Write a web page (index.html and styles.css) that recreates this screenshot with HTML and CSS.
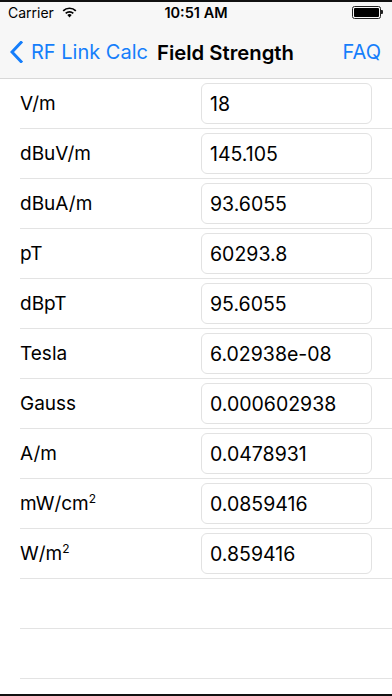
FILE: index.html
```html
<!DOCTYPE html>
<html>
<head>
<meta charset="utf-8">
<link rel="stylesheet" href="styles.css">
</head>
<body>
<div class="screen">
  <div class="status">
    <div class="status-left">
      <span class="carrier">Carrier</span>
      <svg class="wifi" width="15" height="11" viewBox="0 0 15 11">
        <path d="M7.5 10.5 L5.3 8.1 A3.2 3.2 0 0 1 9.7 8.1 Z" fill="#000"/>
        <path d="M3.7 6.4 A5.4 5.4 0 0 1 11.3 6.4" stroke="#000" stroke-width="1.7" fill="none"/>
        <path d="M1.2 3.9 A8.8 8.8 0 0 1 13.8 3.9" stroke="#000" stroke-width="1.7" fill="none"/>
      </svg>
    </div>
    <div class="time">10:51 AM</div>
    <div class="status-right">
      <div class="battery"><div class="battery-fill"></div></div>
      <div class="battery-nub"></div>
    </div>
  </div>
  <div class="nav">
    <div class="back">
      <svg class="chevron" width="13" height="22" viewBox="0 0 13 22">
        <path d="M11 1.5 L2 11 L11 20.5" stroke="#157efb" stroke-width="3" fill="none" stroke-linecap="square"/>
      </svg>
      <span>RF Link Calc</span>
    </div>
    <div class="title">Field Strength</div>
    <div class="faq">FAQ</div>
  </div>
  <div class="list">
    <div class="row"><div class="label">V/m</div><div class="field">18</div></div>
    <div class="row"><div class="label">dBuV/m</div><div class="field">145.105</div></div>
    <div class="row"><div class="label">dBuA/m</div><div class="field">93.6055</div></div>
    <div class="row"><div class="label">pT</div><div class="field">60293.8</div></div>
    <div class="row"><div class="label">dBpT</div><div class="field">95.6055</div></div>
    <div class="row"><div class="label">Tesla</div><div class="field">6.02938e-08</div></div>
    <div class="row"><div class="label">Gauss</div><div class="field">0.000602938</div></div>
    <div class="row"><div class="label">A/m</div><div class="field">0.0478931</div></div>
    <div class="row"><div class="label">mW/cm<sup>2</sup></div><div class="field">0.0859416</div></div>
    <div class="row"><div class="label">W/m<sup>2</sup></div><div class="field">0.859416</div></div>
    <div class="row empty"></div>
    <div class="row empty"></div>
  </div>
  <div class="bottom-edge"></div>
</div>
</body>
</html>
```
FILE: styles.css
```css
html, body {
  margin: 0;
  padding: 0;
  background: #fff;
}
.screen {
  width: 392px;
  height: 696px;
  overflow: hidden;
  display: flex;
  flex-direction: column;
  font-family: Inter, "Liberation Sans", sans-serif;
  color: #000;
}
.status {
  height: 20px;
  border-top: 2px solid #111;
  background: #f7f7f7;
  display: flex;
  align-items: center;
  justify-content: space-between;
  padding: 0 8px;
  position: relative;
  font-size: 14px;
}
.status-left {
  display: flex;
  align-items: center;
  gap: 8px;
}
.time {
  position: absolute;
  left: 0;
  right: 0;
  text-align: center;
  font-weight: 600;
  font-size: 14.5px;
}
.status-right {
  display: flex;
  align-items: center;
  padding-right: 1px;
}
.battery {
  width: 25px;
  height: 9px;
  border: 1px solid #222;
  border-radius: 2.5px;
  padding: 1px;
  box-sizing: content-box;
}
.battery-fill {
  width: 100%;
  height: 100%;
  background: #000;
  border-radius: 1px;
}
.battery-nub {
  width: 2px;
  height: 4px;
  background: #222;
  border-radius: 0 1px 1px 0;
}
.nav {
  box-sizing: border-box;
  height: 57px;
  padding: 4px 11px 0 10px;
  background: #f7f7f7;
  border-bottom: 1px solid #d8d8d8;
  display: flex;
  align-items: center;
  font-size: 20px;
}
.back {
  display: flex;
  align-items: center;
  gap: 8px;
  color: #157efb;
}
.title {
  font-weight: 600;
  font-size: 20.3px;
  margin-left: 9px;
}
.faq {
  margin-left: auto;
  color: #157efb;
}
.list {
  flex: 1;
  display: flex;
  flex-direction: column;
}
.row {
  margin-left: 20px;
  height: 49px;
  border-bottom: 1px solid #e3e3e3;
  display: grid;
  grid-template-columns: 181px 171px;
  align-items: center;
  font-size: 19px;
}
.label sup {
  font-size: 12px;
  vertical-align: 0;
  position: relative;
  top: -7px;
}
.field {
  box-sizing: border-box;
  height: 41px;
  border: 1px solid #e2e2e2;
  border-radius: 6px;
  padding-left: 8px;
  display: flex;
  align-items: center;
  font-size: 19.5px;
}
.bottom-edge {
  margin-top: auto;
  height: 2px;
  background: #111;
}
```
